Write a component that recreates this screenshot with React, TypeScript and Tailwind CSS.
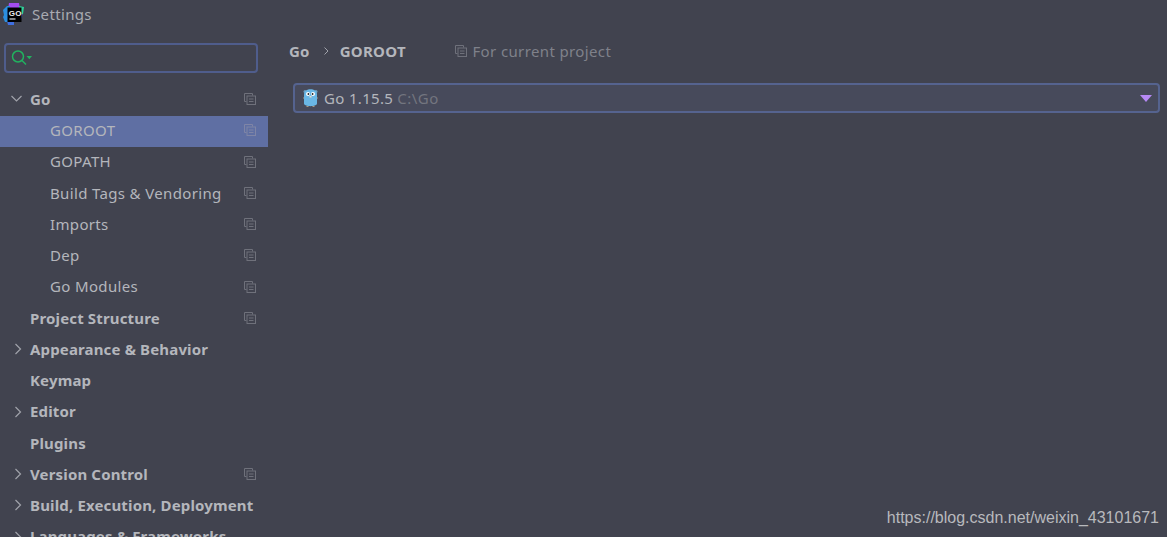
const font = "font-['Noto_Sans','Liberation_Sans',sans-serif]";

const rows = [
  { name: "Go", bold: true, arrow: "down", copy: true },
  { name: "GOROOT", indent: true, selected: true, copy: true },
  { name: "GOPATH", indent: true, copy: true },
  { name: "Build Tags & Vendoring", indent: true, copy: true },
  { name: "Imports", indent: true, copy: true },
  { name: "Dep", indent: true, copy: true },
  { name: "Go Modules", indent: true, copy: true },
  { name: "Project Structure", bold: true, copy: true },
  { name: "Appearance & Behavior", bold: true, arrow: "right" },
  { name: "Keymap", bold: true },
  { name: "Editor", bold: true, arrow: "right" },
  { name: "Plugins", bold: true },
  { name: "Version Control", bold: true, arrow: "right", copy: true },
  { name: "Build, Execution, Deployment", bold: true, arrow: "right" },
  { name: "Languages & Frameworks", bold: true, arrow: "right" },
];

function CopyIcon({ className = "", color = "#6f717b" }: { className?: string; color?: string }) {
  return (
    <svg width="12" height="12" viewBox="0 0 12 12" fill="none" stroke={color} className={className}>
      <path d="M8.5 2.5V.5H.5v8h2" />
      <rect x="3" y="3" width="8.5" height="8.5" />
      <path d="M5 6h4.5M5 8.5h4.5" />
    </svg>
  );
}

function AppLogo() {
  return (
    <svg width="22" height="22" viewBox="0 0 22 22" className="ml-[1px]">
      <path d="M7 0h10l1 6H6z" fill="#a24df0" />
      <path d="M17 3l5 1-1 7-4 1z" fill="#2fd29a" />
      <path d="M5 3h3v16H3L1 14l1-2-1-5z" fill="#2b8fe0" />
      <path d="M5 18h7v4H6z" fill="#3f6fe0" />
      <path d="M12 18h6.5l2-7-2 0z" fill="#3a5fd8" />
      <rect x="5.5" y="4.5" width="14" height="14.5" fill="#000" />
      <path d="M7.5 16h6" stroke="#ddd" strokeWidth="1.2" />
      <text x="6.8" y="12.5" fontSize="8" fontWeight="700" fill="#eee" fontFamily="Liberation Sans, sans-serif">GO</text>
    </svg>
  );
}

function Gopher() {
  return (
    <svg width="15" height="18" viewBox="0 0 15 18">
      <circle cx="2" cy="2.5" r="1.5" fill="#6d9fc0" />
      <circle cx="13" cy="2.5" r="1.5" fill="#6d9fc0" />
      <path d="M1 5.5c0-7 13-7 13 0v9c0 3.5-13 3.5-13 0z" fill="#6ab7e6" />
      <circle cx="5" cy="5" r="2" fill="#fff" />
      <circle cx="10" cy="5" r="2" fill="#fff" />
      <circle cx="5.4" cy="5" r=".9" fill="#222" />
      <circle cx="9.6" cy="5" r=".9" fill="#222" />
      <rect x="6.5" y="7" width="2" height="1.5" fill="#e8dcc8" />
      <path d="M0 9h1M14 9h1M3.5 17.5h2M9.5 17.5h2" stroke="#a89a84" strokeWidth="1" />
    </svg>
  );
}

export default function App() {
  return (
    <div className={`relative flex h-[537px] w-[1167px] flex-col overflow-hidden bg-[#41434f] text-[15px] text-[#b4b6bc] ${font}`}>
      <div className="flex h-[28px] shrink-0 items-center gap-[8px] pl-[1px] tracking-[0.35px] text-[#a9abb2]">
        <AppLogo />
        <span>Settings</span>
      </div>
      <div className="flex min-h-0 flex-1">
        <div className="w-[268px] shrink-0">
          <div className="mx-[4px] mt-[15px] flex h-[30px] w-[254px] items-center rounded-[4px] border-2 border-[#4f5d8c] pl-[5px]">
            <svg width="22" height="18" viewBox="0 0 22 18" fill="none" stroke="#21b35f" strokeWidth="1.5">
              <circle cx="7" cy="7.5" r="5.5" />
              <path d="M11 11.5l4 4" />
              <path d="M15.5 7h5.5l-2.7 3.2z" fill="#21b35f" stroke="none" />
            </svg>
          </div>
          <div className="mt-[11.75px]">
            {rows.map((r) => (
              <div
                key={r.name}
                className={`flex h-[31.25px] items-center pb-[2.5px] pr-[12px] ${r.selected ? "bg-[#5f6fa3]" : ""}`}
              >
                <span className="w-[30px] shrink-0">
                  {r.arrow === "down" && (
                    <svg width="13" height="8" viewBox="0 0 13 8" fill="none" stroke="#a0a2aa" strokeWidth="1.2" className="ml-[10px]">
                      <path d="M1.5 1l5 5 5-5" />
                    </svg>
                  )}
                  {r.arrow === "right" && (
                    <svg width="8" height="12" viewBox="0 0 8 12" fill="none" stroke="#a0a2aa" strokeWidth="1.2" className="ml-[13.5px]">
                      <path d="M1.5 1l5 5-5 5" />
                    </svg>
                  )}
                </span>
                <span className={`flex-1 whitespace-nowrap ${r.indent ? "pl-[20px] tracking-[0.35px]" : ""} ${r.bold ? "font-bold tracking-[0.15px]" : ""}`}>
                  {r.name}
                </span>
                {r.copy && <CopyIcon color={r.selected ? "#7f85a6" : "#6f717b"} />}
              </div>
            ))}
          </div>
        </div>
        <div className="flex-1 pl-[21px] pr-[7px]">
          <div className="mt-[12px] flex h-[22px] items-center">
            <span className="font-bold tracking-[0.2px]">Go</span>
            <svg width="6" height="8" viewBox="0 0 6 8" fill="none" stroke="#a0a2aa" strokeWidth="1" className="ml-[13px] mr-[11px]">
              <path d="M1.5 .5l3.5 3.5-3.5 3.5" />
            </svg>
            <span className="font-bold tracking-[0.3px]">GOROOT</span>
            <CopyIcon className="ml-[49.5px] mr-[5px]" />
            <span className="tracking-[0.37px] text-[#7f818a]">For current project</span>
          </div>
          <div className="ml-[4px] mt-[21px] flex h-[30px] items-center rounded-[4px] border-2 border-[#55638f] bg-[#474a5b] pl-[8px] pr-[6px]">
            <Gopher />
            <span className="ml-[6px] tracking-[0.33px]">Go 1.15.5</span>
            <span className="ml-[4px] tracking-[0.5px] text-[#73757f]">C:\Go</span>
            <svg width="12" height="7" viewBox="0 0 12 7" className="ml-auto">
              <path d="M0 0h12L6 7z" fill="#b689f5" />
            </svg>
          </div>
        </div>
      </div>
      <div className="absolute bottom-[9px] right-[8px] font-['Liberation_Sans',sans-serif] text-[16px] leading-[20px] text-[#b8b9bd]">
        https://blog.csdn.net/weixin_43101671
      </div>
    </div>
  );
}
